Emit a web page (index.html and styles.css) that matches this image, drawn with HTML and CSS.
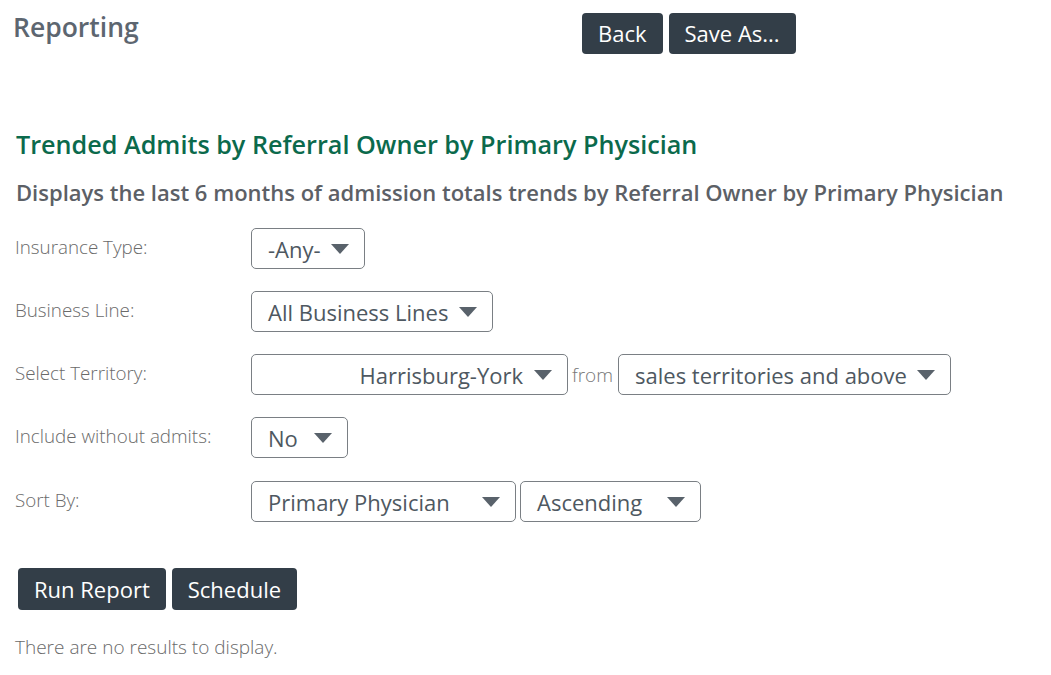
FILE: index.html
```html
<!DOCTYPE html>
<html>
<head>
<meta charset="utf-8">
<link rel="stylesheet" href="styles.css">
</head>
<body>
<div class="page">
  <header class="top">
    <h1 class="page-title">Reporting</h1>
    <div class="top-actions">
      <button class="btn">Back</button>
      <button class="btn">Save As...</button>
    </div>
  </header>

  <h2 class="report-title">Trended Admits by Referral Owner by Primary Physician</h2>
  <p class="report-desc">Displays the last 6 months of admission totals trends by Referral Owner by Primary Physician</p>

  <div class="form">
    <div class="row">
      <div class="label">Insurance Type:</div>
      <div class="controls">
        <div class="select w-any"><span class="val">-Any-</span><span class="caret"></span></div>
      </div>
    </div>
    <div class="row">
      <div class="label">Business Line:</div>
      <div class="controls">
        <div class="select w-bl"><span class="val">All Business Lines</span><span class="caret"></span></div>
      </div>
    </div>
    <div class="row">
      <div class="label">Select Territory:</div>
      <div class="controls">
        <div class="select w-terr right"><span class="val">Harrisburg-York</span><span class="caret"></span></div>
        <span class="from">from</span>
        <div class="select w-sales"><span class="val">sales territories and above</span><span class="caret"></span></div>
      </div>
    </div>
    <div class="row">
      <div class="label">Include without admits:</div>
      <div class="controls">
        <div class="select w-no"><span class="val">No</span><span class="caret"></span></div>
      </div>
    </div>
    <div class="row row-sort">
      <div class="label">Sort By:</div>
      <div class="controls gap4">
        <div class="select w-pp"><span class="val">Primary Physician</span><span class="caret"></span></div>
        <div class="select w-asc"><span class="val">Ascending</span><span class="caret"></span></div>
      </div>
    </div>
  </div>

  <div class="actions">
    <button class="btn">Run Report</button>
    <button class="btn">Schedule</button>
  </div>

  <p class="empty">There are no results to display.</p>
</div>
</body>
</html>
```

FILE: styles.css
```css
* { box-sizing: border-box; }
html, body { margin: 0; padding: 0; background: #fff; }
body { font-family: "Open Sans", "Liberation Sans", sans-serif; color: #5a5a5a; }

.page { padding: 0 0 0 15px; }

.top { display: flex; align-items: flex-start; }
.page-title {
  margin: 10px 0 0 -2px;
  width: 569px;
  font-size: 26.5px;
  font-weight: 600;
  color: #5d6670;
  line-height: 34px;
}
.top-actions { display: flex; gap: 6px; margin-top: 13px; }

.btn {
  font-family: "Open Sans", "Liberation Sans", sans-serif;
  font-size: 22px;
  font-weight: 400;
  color: #fff;
  background: #333e48;
  border: none;
  border-radius: 4px;
  height: 41px;
  padding: 0 16px;
  line-height: 41px;
  cursor: pointer;
}

.report-title {
  margin: 72px 0 0 1px;
  font-size: 25.2px;
  font-weight: 600;
  color: #0b6a4c;
  line-height: 36px;
}
.report-desc {
  margin: 14px 0 0 1px;
  font-size: 22px;
  font-weight: 600;
  color: #5c6066;
  line-height: 32px;
}

.form { margin-top: 20px; display: flex; flex-direction: column; gap: 23px; }
.row { display: flex; align-items: flex-start; height: 40px; }
.row-sort { margin-top: 1px; }
.label {
  width: 236px;
  font-size: 18.8px;
  font-weight: 300;
  color: #6a6a6a;
  line-height: 38px;
}
.controls { display: flex; align-items: center; }
.gap4 { gap: 4px; }

.select {
  height: 41px;
  border: 1px solid #7a7f84;
  border-radius: 5px;
  display: flex;
  align-items: center;
  justify-content: space-between;
  padding: 0 15px 0 16px;
  font-size: 22px;
  font-weight: 400;
  color: #4e5861;
  white-space: nowrap;
}
.select.right { justify-content: flex-end; gap: 11px; }
.caret {
  width: 0; height: 0;
  border-left: 9px solid transparent;
  border-right: 9px solid transparent;
  border-top: 10px solid #59626b;
  margin-left: 10px;
  flex: none;
}
.select.right .caret { margin-left: 0; }

.w-any { width: 114px; }
.w-bl { width: 242px; }
.w-terr { width: 317px; }
.w-sales { width: 333px; }
.w-no { width: 97px; }
.w-pp { width: 265px; }
.w-asc { width: 181px; }

.from {
  font-size: 19px;
  font-weight: 300;
  color: #777;
  margin: 0 5px 0 4px;
}

.actions { display: flex; gap: 6px; margin: 47px 0 0 3px; }
.actions .btn { height: 42px; }

.empty {
  margin: 24px 0 0 0;
  font-size: 19px;
  font-weight: 300;
  color: #6a6a6a;
}
```
